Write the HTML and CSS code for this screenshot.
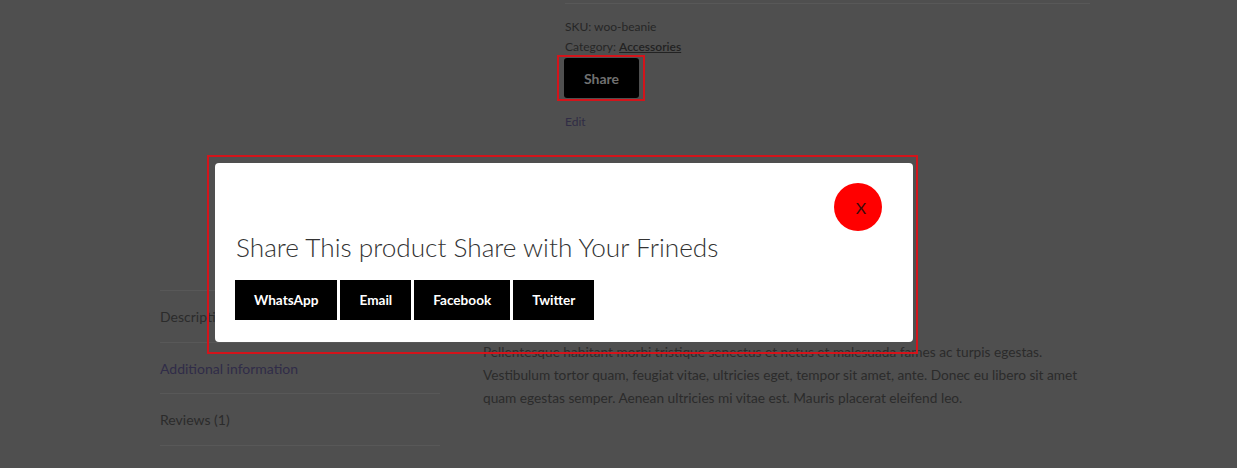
FILE: index.html
```html
<!DOCTYPE html>
<html lang="en">
<head>
<meta charset="utf-8">
<title>Woo Beanie</title>
<link rel="stylesheet" href="styles.css">
</head>
<body>
<div class="page">
  <section class="product-top">
    <div class="gallery"></div>
    <div class="summary">
      <div class="meta">
        <div class="meta-line">SKU: woo-beanie</div>
        <div class="meta-line">Category: <a class="cat-link" href="#">Accessories</a></div>
      </div>
      <div class="share-ring"><button class="share-btn">Share</button></div>
      <a class="edit-link" href="#">Edit</a>
    </div>
  </section>
  <section class="product-tabs">
    <ul class="tabs">
      <li class="tab">Description</li>
      <li class="tab tab-link">Additional information</li>
      <li class="tab">Reviews (1)</li>
    </ul>
    <div class="panel">
      <p class="panel-text">Pellentesque habitant morbi tristique senectus et netus et malesuada fames ac turpis egestas. Vestibulum tortor quam, feugiat vitae, ultricies eget, tempor sit amet, ante. Donec eu libero sit amet quam egestas semper. Aenean ultricies mi vitae est. Mauris placerat eleifend leo.</p>
    </div>
  </section>
</div>

<div class="modal-ring">
  <div class="modal">
    <div class="modal-top"><button class="close-btn">X</button></div>
    <h2 class="modal-title">Share This product Share with Your Frineds</h2>
    <div class="share-list">
      <a class="share-item" href="#">WhatsApp</a>
      <a class="share-item" href="#">Email</a>
      <a class="share-item" href="#">Facebook</a>
      <a class="share-item" href="#">Twitter</a>
    </div>
  </div>
</div>
</body>
</html>
```

FILE: styles.css
```css
* { box-sizing: border-box; }
html, body { margin: 0; padding: 0; }
body {
  background: #4f4f4f;
  font-family: "Lato", "Open Sans", "Liberation Sans", sans-serif;
  color: #2b2b2b;
  width: 1237px;
  height: 468px;
  overflow: hidden;
  position: relative;
}
.page { padding-left: 160px; width: 1090px; }
.product-top { display: grid; grid-template-columns: 405px 525px; height: 290px; }
.summary { padding-top: 3px; }
.meta { border-top: 1px solid #585858; padding-top: 13px; }
.meta-line { font-size: 12px; line-height: 20px; color: #262626; }
.cat-link { color: #222; font-weight: 600; text-decoration: underline; }
.share-ring {
  display: inline-block;
  margin-left: -8px;
  margin-top: -2px;
  border: 2px solid #d3141b;
  padding: 1px 4px 1px 5px;
}
.share-btn {
  display: block;
  width: 75px;
  height: 40px;
  background: #000;
  color: #707070;
  border: 0;
  border-radius: 3px;
  font-family: inherit;
  font-weight: 700;
  font-size: 14px;
  padding: 0;
}
.edit-link { display: block; margin-top: 13px; font-size: 12px; line-height: 16px; color: #302c45; text-decoration: none; }

.product-tabs { display: grid; grid-template-columns: 280px 607px; column-gap: 43px; }
.tabs { list-style: none; margin: 0; padding: 0; border-top: 1px solid #585858; }
.tab {
  height: 51.5px;
  line-height: 51px;
  font-size: 14px;
  color: #2b2b2b;
  border-bottom: 1px solid #585858;
}
.tab-link { color: #302c48; }
.panel { padding-top: 50px; }
.panel-text { margin: 0; font-size: 13.7px; line-height: 23px; color: #2b2b2b; }

.modal-ring {
  position: absolute;
  left: 207px;
  top: 155px;
  width: 711px;
  height: 199px;
  border: 2px solid #d3141b;
  padding: 6px 3px 10px 6px;
}
.modal {
  background: #fff;
  border-radius: 4px;
  height: 100%;
  padding: 20px;
  display: flex;
  flex-direction: column;
}
.modal-top { display: flex; justify-content: flex-end; padding-right: 11px; }
.close-btn {
  width: 48px;
  height: 48px;
  border-radius: 50%;
  border: 0;
  background: #ff0000;
  color: #3a0a0a;
  font-family: inherit;
  font-size: 16px;
  padding: 0 0 0 6px;
}
.modal-title {
  margin: 0;
  font-weight: 300;
  font-size: 26.2px;
  line-height: 32px;
  color: #333;
  padding-left: 1px;
}
.share-list { display: flex; gap: 3px; margin-top: 17px; }
.share-item {
  display: block;
  height: 40px;
  line-height: 40px;
  padding: 0 19px;
  background: #000;
  color: #fff;
  font-weight: 700;
  font-size: 13.6px;
  text-decoration: none;
}
```
